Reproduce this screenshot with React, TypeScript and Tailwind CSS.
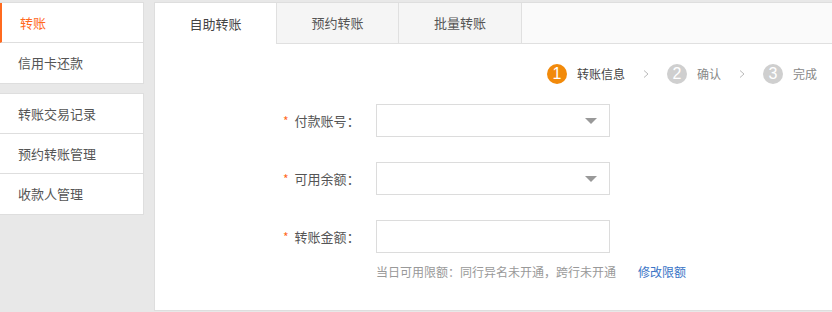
import React from "react";

const font = { fontFamily: '"Noto Sans CJK SC", "Liberation Sans", sans-serif' };

function SideItem({ label, active = false, last = false }: { label: string; active?: boolean; last?: boolean }) {
    return (
        <div
            className={`flex h-[40px] items-center pl-[18px] text-[13px] ${last ? "" : "border-b border-[#dedede]"} ${
                active ? "border-l-2 border-l-[#ff6a1f] pl-[16px] text-[#ff6a1f]" : "text-[#555]"
            }`}
        >
            {label}
        </div>
    );
}

function Step({ n, label, active = false }: { n: number; label: string; active?: boolean }) {
    return (
        <div className="flex items-center gap-[10px]">
            <span
                className={`flex h-[20px] w-[20px] items-center justify-center rounded-full text-[16px] leading-none text-white ${
                    active ? "bg-[#f28a0a]" : "bg-[#cfcfcf]"
                }`}
                style={{ fontFamily: '"Liberation Sans", sans-serif' }}
            >
                {n}
            </span>
            <span className={`text-[12px] ${active ? "text-[#444]" : "text-[#888]"}`}>{label}</span>
        </div>
    );
}

function Chevron() {
    return (
        <svg width="8" height="10" viewBox="0 0 8 10" className="mx-[17px]">
            <path d="M2 1.5 L6 5 L2 8.5" fill="none" stroke="#bbb" strokeWidth="1" />
        </svg>
    );
}

function FieldRow({ label, select = false }: { label: string; select?: boolean }) {
    return (
        <div className="flex items-center">
            <div className="flex w-[221px] items-center pl-[128px] text-[13px] text-[#555]">
                <span className="mr-[6px] text-[12px] text-[#ff6a1f]">*</span>
                <span>{label}：</span>
            </div>
            <div className="flex h-[33px] w-[234px] items-center justify-end border border-[#dcdcdc] bg-white pr-[12px]">
                {select && (
                    <svg width="12" height="6" viewBox="0 0 12 6">
                        <path d="M0 0 H12 L6 6 Z" fill="#999" />
                    </svg>
                )}
            </div>
        </div>
    );
}

export default function App() {
    return (
        <div className="flex h-[312px] w-[832px] overflow-hidden bg-[#e8e8e8] pt-[2px]" style={font}>
            <aside className="flex w-[144px] shrink-0 flex-col gap-[9px]">
                <div className="border border-l-0 border-[#dedede] bg-white">
                    <SideItem label="转账" active />
                    <SideItem label="信用卡还款" last />
                </div>
                <div className="border border-l-0 border-[#dedede] bg-white">
                    <SideItem label="转账交易记录" />
                    <SideItem label="预约转账管理" />
                    <SideItem label="收款人管理" last />
                </div>
            </aside>

            <main className="ml-[10px] flex h-[309px] flex-1 flex-col border border-r-0 border-[#dedede] bg-white">
                <div className="flex h-[41px] text-[13px]">
                    <div className="flex w-[122px] items-center justify-center border-r border-[#e0e0e0] bg-white text-[#444]">
                        自助转账
                    </div>
                    <div className="flex w-[122px] items-center justify-center border-b border-r border-[#e0e0e0] bg-[#f5f5f5] text-[#555]">
                        预约转账
                    </div>
                    <div className="flex w-[123px] items-center justify-center border-b border-r border-[#e0e0e0] bg-[#f5f5f5] text-[#555]">
                        批量转账
                    </div>
                    <div className="flex-1 border-b border-[#e0e0e0] bg-[#fafafa]" />
                </div>

                <div className="mt-[20px] flex items-center justify-end pr-[15px]">
                    <Step n={1} label="转账信息" active />
                    <Chevron />
                    <Step n={2} label="确认" />
                    <Chevron />
                    <Step n={3} label="完成" />
                </div>

                <div className="mt-[20px] flex flex-col">
                    <FieldRow label="付款账号" select />
                    <div className="h-[25px]" />
                    <FieldRow label="可用余额" select />
                    <div className="h-[25px]" />
                    <FieldRow label="转账金额" />
                    <div className="mt-[10px] flex pl-[221px] text-[12px]">
                        <span className="text-[#999]">当日可用限额：同行异名未开通，跨行未开通</span>
                        <a className="ml-[22px] text-[#3a74c6]" href="#">修改限额</a>
                    </div>
                </div>
            </main>
        </div>
    );
}
